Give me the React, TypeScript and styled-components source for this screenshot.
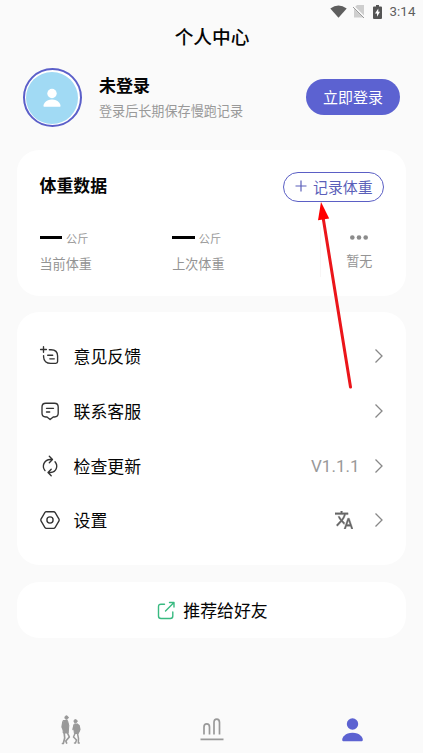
import React from "react";
import styled, { createGlobalStyle } from "styled-components";

const GlobalStyle = createGlobalStyle`
  * { box-sizing: border-box; }
  body { margin: 0; background: #fafafa; overflow: hidden; }
  svg { display: block; flex: none; }
`;

const Screen = styled.div`
  position: relative;
  width: 423px;
  height: 753px;
  display: flex;
  flex-direction: column;
  background: #fafafa;
  color: #050505;
  font-family: Roboto, "Noto Sans CJK SC", sans-serif;
  overflow: hidden;
  white-space: nowrap;
`;

const StatusBar = styled.div`
  height: 22px;
  display: flex;
  align-items: center;
  justify-content: flex-end;
  padding: 1px 7.5px 0 0;
  font-size: 13.3px;
  letter-spacing: 0.1px;
  color: #5e5e5e;
  svg:nth-of-type(1) { margin-right: 6px; }
  svg:nth-of-type(2) { margin-right: 8px; }
  svg:nth-of-type(3) { margin-right: 7px; }
`;

const Title = styled.h1`
  margin: 0;
  height: 30px;
  line-height: 30px;
  padding: 1px 0 0 1px;
  font-size: 18.7px;
  font-weight: 500;
  text-align: center;
`;

const Profile = styled.section`
  height: 98px;
  display: flex;
  align-items: center;
  padding: 0 23px 8px 22.5px;
`;

const Avatar = styled.div`
  width: 59.500px;
  height: 59.500px;
  margin-top: 1px;
  border: 2px solid #5b5fc9;
  border-radius: 50%;
  background: #fff;
  padding: 1.750px;
`;

const AvatarFill = styled.div`
  width: 52px;
  height: 52px;
  border-radius: 50%;
  background: #a1daf4;
  display: flex;
  align-items: center;
  justify-content: center;
`;

const Identity = styled.div`
  flex: 1;
  margin: 1px 0 0 17px;
`;

const Name = styled.div`
  font-size: 17px;
  line-height: 24px;
  font-weight: 700;
`;

const Hint = styled.div`
  font-size: 13.1px;
  line-height: 20px;
  margin-top: 4px;
  color: #999;
`;

const LoginButton = styled.button`
  width: 94px;
  height: 36px;
  padding: 0 0 1px;
  border: 0;
  border-radius: 18px;
  background: #5c62d1;
  color: #fff;
  font: 15px Roboto, "Noto Sans CJK SC", sans-serif;
`;

const Card = styled.section`
  margin: 0 17px;
  background: #fff;
  border-radius: 22px;
`;

const WeightCard = styled(Card)`
  height: 146px;
  padding: 22px 22.5px 0 22.5px;
`;

const CardHead = styled.div`
  display: flex;
  align-items: center;
  justify-content: space-between;
  height: 30px;
`;

const CardTitle = styled.h2`
  margin: 0;
  font-size: 16.9px;
  line-height: 28px;
  padding-bottom: 3px;
  font-weight: 700;
`;

const RecordButton = styled.button`
  width: 101px;
  height: 30px;
  display: flex;
  align-items: center;
  gap: 6.500px;
  padding: 0 0 2px 11px;
  border: 1px solid #5b5fc5;
  border-radius: 15px;
  background: #fff;
  color: #5b5fb9;
  white-space: nowrap;
  font: 14.9px Roboto, "Noto Sans CJK SC", sans-serif;
`;

const Stats = styled.div`
  display: grid;
  grid-template-columns: 132.7px 147.8px 1fr;
  margin-top: 25px;
`;

const Stat = styled.div`
  height: 50px;
`;

const StatValue = styled.div`
  height: 22px;
  display: flex;
  align-items: center;
  gap: 4px;
  font-size: 11.2px;
  color: #999;
`;

const Dash = styled.span`
  width: 22.500px;
  height: 3px;
  margin-top: -1px;
  background: #000;
`;

const StatLabel = styled.div`
  font-size: 13.1px;
  line-height: 20px;
  margin-top: 5.500px;
  color: #949494;
`;

const MoreStat = styled(Stat)`
  border-left: 1px solid #f8f6f6;
  display: flex;
  flex-direction: column;
  align-items: center;
  padding: 8px 0 0 14px;
  ${StatLabel} { margin-top: 12px; }
`;

const MenuCard = styled(Card)`
  height: 253px;
  margin-top: 16px;
  padding: 17px 21px 0 22px;
`;

const MenuRow = styled.div`
  height: 54.7px;
  display: flex;
  align-items: center;
`;

const MenuLabel = styled.span`
  flex: 1;
  margin-left: 12.500px;
  padding-bottom: 1px;
  font-size: 16.9px;
`;

const Version = styled.span`
  margin-right: 13.500px;
  font-size: 17px;
  letter-spacing: 0;
  color: #999;
`;

const LanguageIcon = styled.svg`
  margin-right: 20.500px;
`;

const ShareCard = styled(Card)`
  height: 56px;
  margin-top: 17px;
  padding-left: 2px;
  display: flex;
  align-items: center;
  justify-content: center;
  gap: 7px;
  font-size: 16.9px;
`;

const ShareLabel = styled.span`
  padding-bottom: 2px;
`;

const TabBar = styled.nav`
  margin-top: auto;
  height: 50px;
  display: grid;
  grid-template-columns: repeat(3, 1fr);
  justify-items: center;
  align-items: center;
  svg { margin-top: 4px; }
`;

const Arrow = styled.svg`
  position: absolute;
  left: 310px;
  top: 195px;
  pointer-events: none;
`;

const Chevron = () => (
  <svg width="12" height="16" viewBox="0 0 12 16" fill="none" stroke="#888" strokeWidth="1.3">
    <path d="M2.5 1.5 9 8l-6.5 6.5" />
  </svg>
);

const LineIcon = ({ children }: { children: React.ReactNode }) => (
  <svg width="22" height="22" viewBox="0 0 22 22" fill="none" stroke="#333" strokeWidth="1.35" strokeLinecap="round" strokeLinejoin="round">
    {children}
  </svg>
);

const items = [
  {
    label: "意见反馈",
    icon: <path d="M4.500 1.700v5.600M1.600 4.500h5.800M10.300 4.700h1.700c4 0 6.600 2.500 6.600 6.400v5.500q0 1.800-1.800 1.800h-5.100c-4.200 0-7-2.600-7.100-6.300v-1.500M8.700 10.200h5M10.800 13.800h4.500" />,
  },
  {
    label: "联系客服",
    icon: <path d="M6.800 3.200h8.600q3.800 0 3.800 3.800v6.200q0 3.600-3.800 3.800h-1.200l-3.100 2.600L8 17H6.800Q3 16.800 3 13.200V7q0-3.800 3.800-3.800ZM7.500 8.300h7M7.500 12h3.200" />,
  },
  {
    label: "检查更新",
    icon: <path d="M6 15.600C2.700 11.500 4.500 4.800 11.500 4.500h1.400M10.300 1.300l3.200 3.200-3.200 3.200M16 6.800c3.400 4 1.600 10.300-4.500 10.700H9.200M12.200 14.300 9 17.500l3.200 3.200" />,
  },
  {
    label: "设置",
    icon: <><path d="M7.400 2.700h7.200q1 0 1.600 1l3.800 6.400q.4.900 0 1.800l-3.800 6.400q-.6 1-1.600 1H7.400q-1 0-1.600-1L2 11.900q-.4-.9 0-1.800l3.800-6.400q.6-1 1.600-1Z" /><circle cx="11" cy="11" r="3.1" /></>,
  },
];

export default function App() {
  return (
    <>
      <GlobalStyle />
      <Screen>
        <StatusBar>
          <svg width="17" height="13" viewBox="0 0 17 13" fill="#5e5e5e"><path d="M.3 3.500Q8.500-2.500 16.700 3.500L8.500 12.800Z" /></svg>
          <svg width="12" height="13" viewBox="0 0 12 13"><path d="M4 0h7v12.500H1V3Z" fill="#cecece" /><path d="m0 1 12 12" stroke="#fafafa" strokeWidth="2" /><path d="m0 2 11 11" stroke="#999" strokeWidth="1" /></svg>
          <svg width="9" height="14" viewBox="0 0 9 14"><path d="M3 0h3v1.500h2q1 0 1 1V13q0 1-1 1H1q-1 0-1-1V2.500q0-1 1-1h2Z" fill="#555" /><path d="M5.300 3.500 2 8.500h2v3.300l3-5H5.300Z" fill="#fff" /></svg>
          3:14
        </StatusBar>
        <Title>个人中心</Title>
        <Profile>
          <Avatar><AvatarFill>
            <svg width="18" height="20" viewBox="0 0 18 20" fill="#fff"><circle cx="9" cy="5.5" r="4.7" /><path d="M1 18.700c-1.500 0 0-7.200 8-7.200s9.500 7.200 8 7.200Z" /></svg>
          </AvatarFill></Avatar>
          <Identity><Name>未登录</Name><Hint>登录后长期保存慢跑记录</Hint></Identity>
          <LoginButton>立即登录</LoginButton>
        </Profile>
        <WeightCard>
          <CardHead>
            <CardTitle>体重数据</CardTitle>
            <RecordButton>
              <svg width="12" height="12" viewBox="0 0 12 12" stroke="#5b5fb9" strokeWidth="1.2"><path d="M6 .5v11M.5 6h11" /></svg>
              记录体重
            </RecordButton>
          </CardHead>
          <Stats>
            {["当前体重", "上次体重"].map((label) => (
              <Stat key={label}>
                <StatValue><Dash />公斤</StatValue>
                <StatLabel>{label}</StatLabel>
              </Stat>
            ))}
            <MoreStat>
              <svg width="20" height="5" viewBox="0 0 20 5" fill="#8b8b8b"><circle cx="3.3" cy="2.5" r="2.3" /><circle cx="10" cy="2.5" r="2.3" /><circle cx="16.7" cy="2.5" r="2.3" /></svg>
              <StatLabel>暂无</StatLabel>
            </MoreStat>
          </Stats>
        </WeightCard>
        <MenuCard>
          {items.map((item) => (
            <MenuRow key={item.label}>
              <LineIcon>{item.icon}</LineIcon>
              <MenuLabel>{item.label}</MenuLabel>
              {item.label === "检查更新" && <Version>V1.1.1</Version>}
              {item.label === "设置" && (
                <LanguageIcon width="18" height="18" viewBox="1 2 22 20" preserveAspectRatio="none" fill="#666" stroke="#666" strokeWidth="0.4">
                  <path d="m12.870 15.070-2.540-2.510.03-.03A17.520 17.520 0 0 0 14.070 6H17V4h-7V2H8v2H1v2h11.170C11.500 7.920 10.440 9.750 9 11.350 8.070 10.320 7.300 9.190 6.690 8h-2c.73 1.630 1.730 3.170 2.980 4.560l-5.090 5.020L4 19l5-5 3.110 3.110.76-2.040ZM18.500 10h-2L12 22h2l1.120-3h4.750L21 22h2l-4.500-12Zm-2.620 7 1.620-4.330L19.120 17h-3.240Z" />
                </LanguageIcon>
              )}
              <Chevron />
            </MenuRow>
          ))}
        </MenuCard>
        <ShareCard>
          <svg width="19" height="19" viewBox="0 0 19 19" fill="none" stroke="#39ba81" strokeWidth="1.4" strokeLinecap="round" strokeLinejoin="round"><path d="M7.500 3.200H4Q1.500 3.200 1.500 5.700V15q0 2.500 2.500 2.500h9.300q2.500 0 2.500-2.500v-4M8.500 10l8.500-8.500M12.500 1.500H17V6" /></svg>
          <ShareLabel>推荐给好友</ShareLabel>
        </ShareCard>
        <TabBar>
          <svg width="20" height="31" viewBox="0 0 20 31" fill="#999" stroke="#999" strokeLinecap="round" strokeLinejoin="round">
            <ellipse cx="5.500" cy="2.600" rx="1.600" ry="1.800" /><path d="M2.500 5.500h4l1.300 5-.6 7.500H2.200l-.2-7Z" />
            <path d="m2 7-.8 5 1.500 3M3.200 18l.5 5-1.400 5.500H1.500M6.500 18l1.800 4-3.500 4 .8 2" fill="none" strokeWidth="1.700" />
            <ellipse cx="14.500" cy="6.200" rx="1.500" ry="1.700" /><path d="M13.500 9h3.500l1.200 4-.8 5.500h-4l-.6-5Z" />
            <path d="m13 10.500-1 4M18 10.500l.8 4-1 2.500M14 18.500l-1.500 3.500 3 3-1 3h-1M16.500 18.500l1 5-.2 4.500h1" fill="none" strokeWidth="1.500" />
          </svg>
          <svg width="24" height="24" viewBox="0 0 24 24" fill="none" stroke="#999" strokeWidth="1.7"><path d="M4 16.500V9c0-4.300 5.500-4.300 5.500 0v7.500M14 16.500V4.500c0-4.500 5.500-4.500 5.500 0v12M.5 21.300h23" /></svg>
          <svg width="22" height="26" viewBox="0 0 22 26" fill="#5c62d1"><circle cx="10.500" cy="7" r="5.700" /><path d="M1.200 24.300C-1.300 24.300.5 15.800 10.500 15.800s11.800 8.500 9.300 8.500Z" /></svg>
        </TabBar>
        <Arrow width="50" height="200" viewBox="0 0 50 200">
          <path d="m13 22 27.500 170" stroke="#eb151a" strokeWidth="3" strokeLinecap="round" />
          <path d="m11 7 8.200 16.500L8 25.300Z" fill="#f00" />
        </Arrow>
      </Screen>
    </>
  );
}
